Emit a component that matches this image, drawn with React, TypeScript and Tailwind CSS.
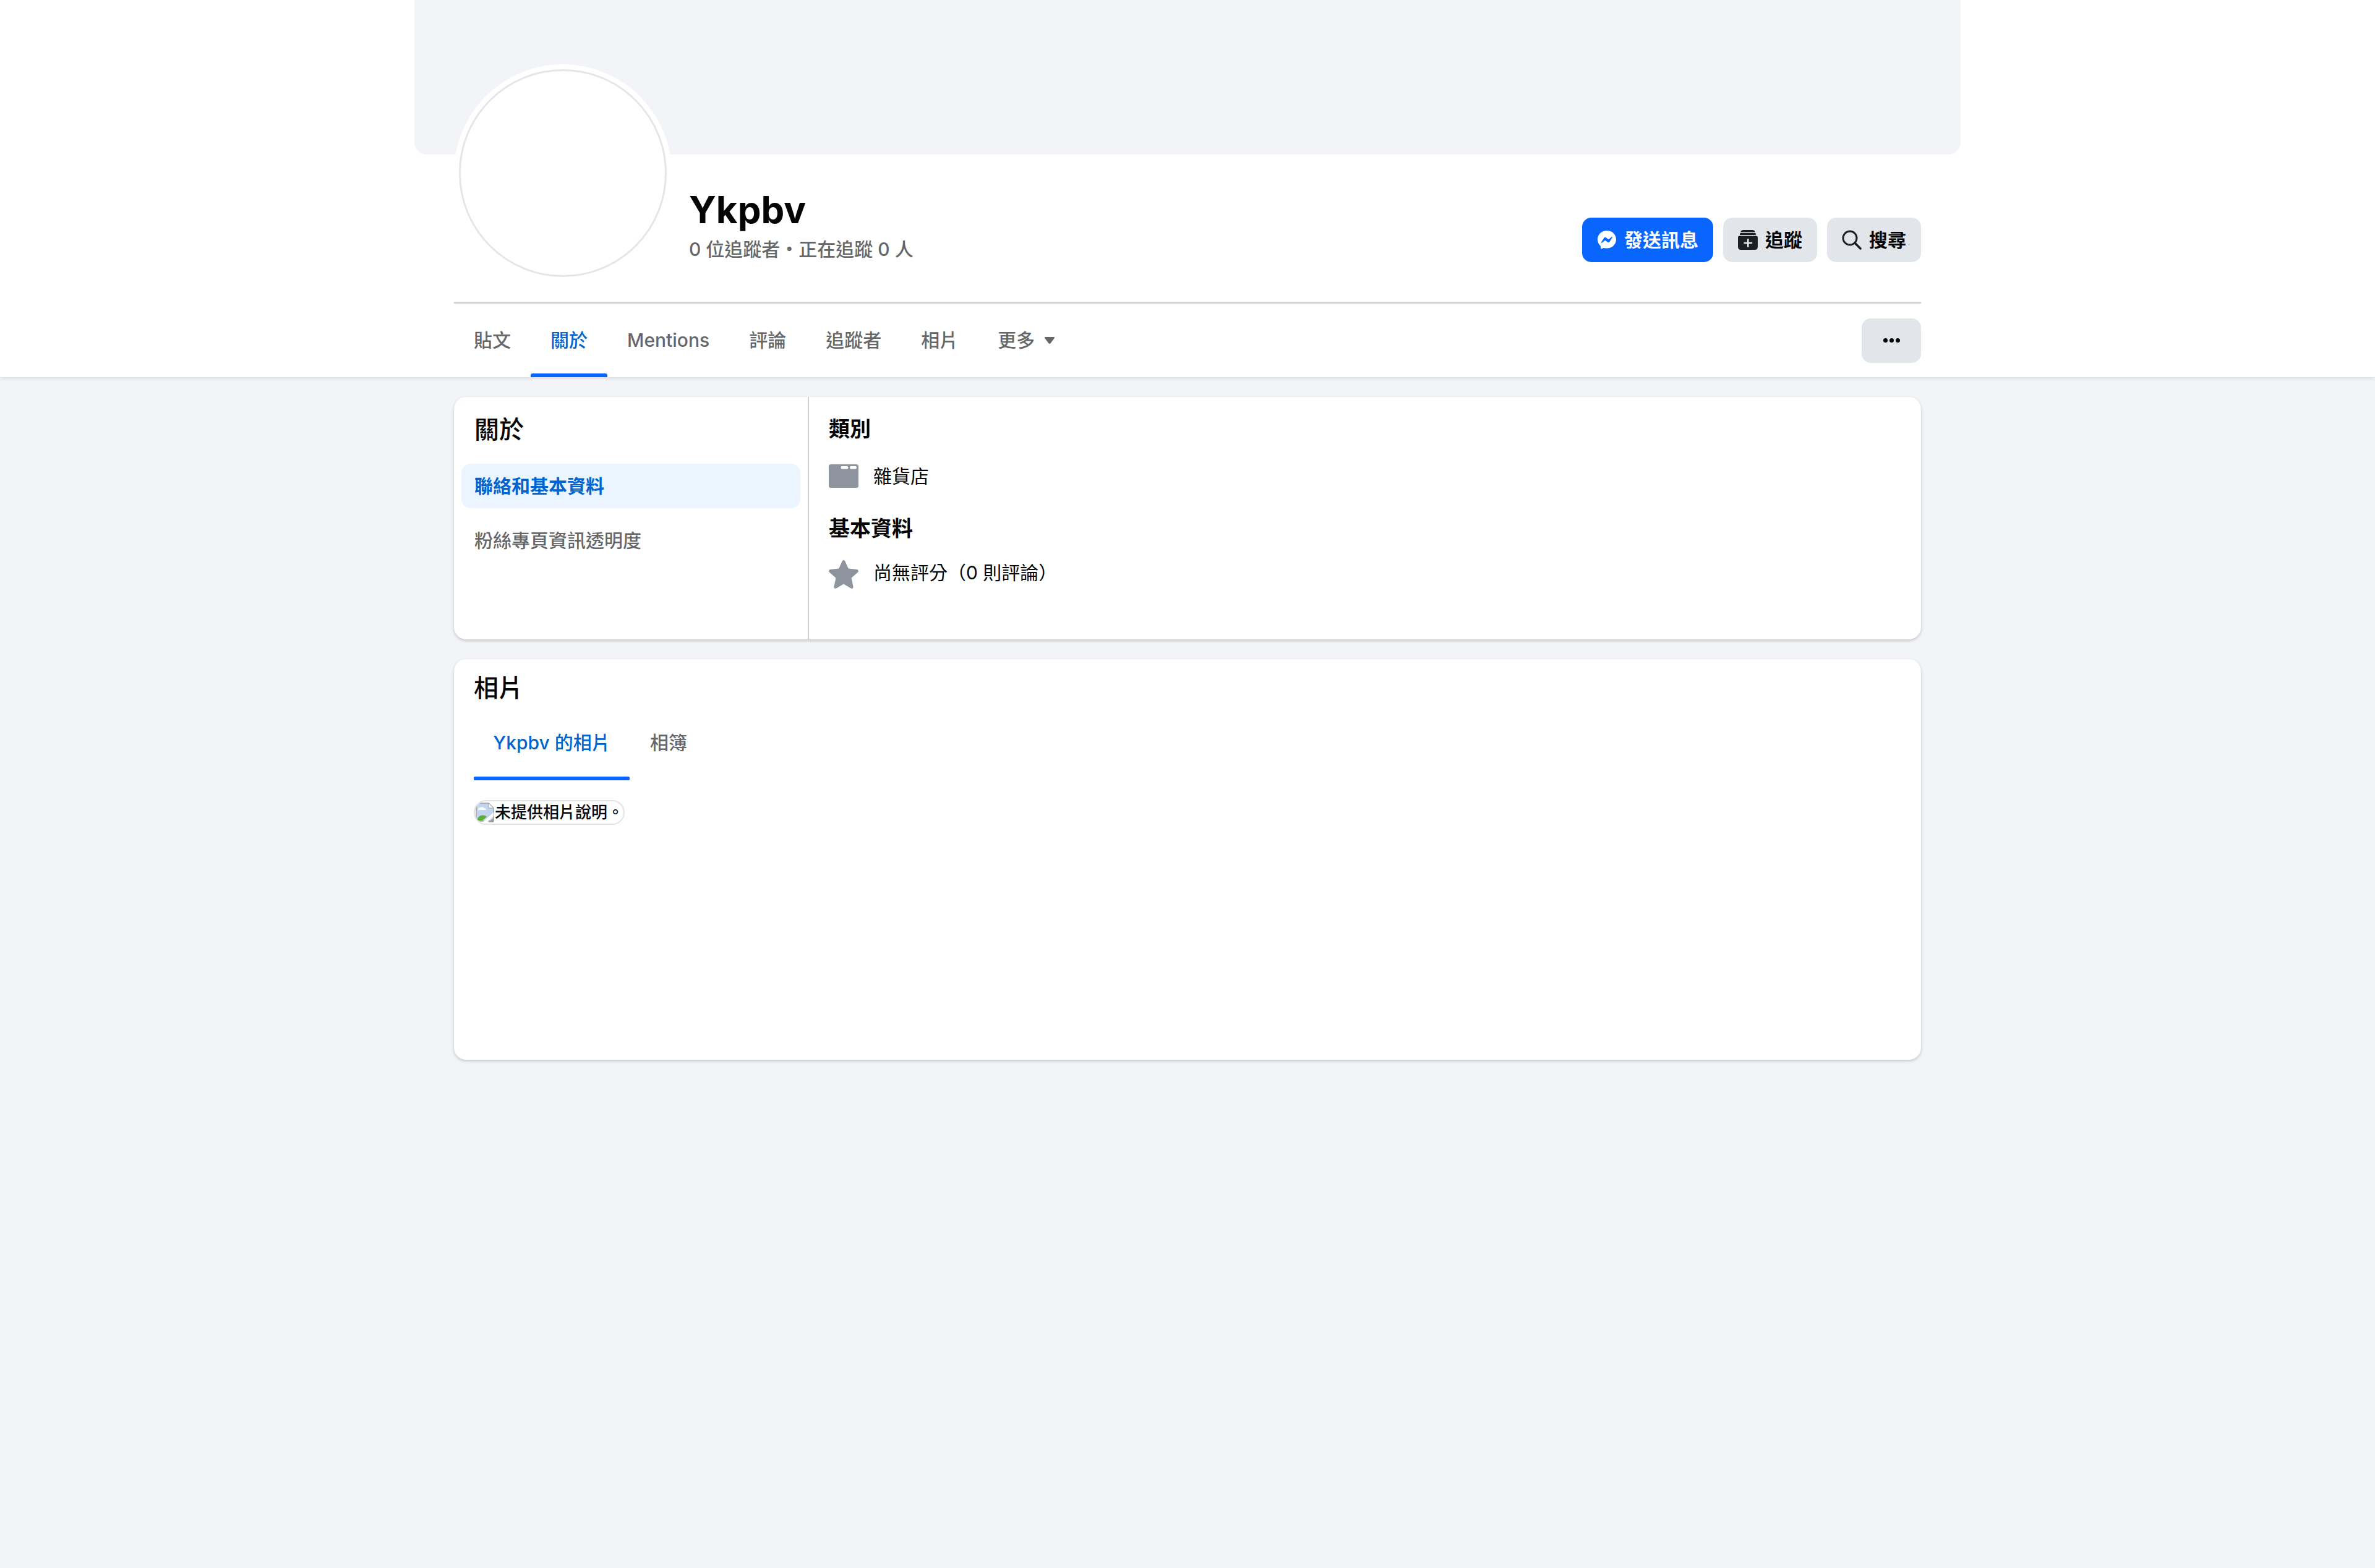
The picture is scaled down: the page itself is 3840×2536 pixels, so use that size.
const tabs = ['貼文', '關於', 'Mentions', '評論', '追蹤者', '相片']

function MessengerIcon() {
  return (
    <svg viewBox="0 0 32 32" className="w-[32px] h-[32px]">
      <path fill="#fff" d="M16 1C7.600 1 1 7.200 1 15.300c0 4.200 1.800 7.900 4.700 10.500.3.200.4.500.4.900l.1 2.600c0 .8.900 1.400 1.700 1l2.900-1.300c.2-.1.500-.1.800-.1 1.300.4 2.800.6 4.400.6 8.400 0 15-6.200 15-14.300S24.400 1 16 1z" />
      <path fill="#0866ff" d="M7 19.800l4.400-7c.7-1.100 2.200-1.400 3.200-.6l3.500 2.600c.3.200.8.200 1.100 0l4.700-3.600c.6-.5 1.400.3 1 .9l-4.400 7c-.7 1.100-2.200 1.400-3.200.6l-3.500-2.600c-.3-.2-.8-.2-1.100 0l-4.700 3.600c-.6.500-1.400-.3-1-.9z" />
    </svg>
  )
}

function FollowIcon() {
  return (
    <svg viewBox="0 0 32 32" className="w-[32px] h-[32px]">
      <path fill="#1c1e21" d="M9 0h14c2.500 0 4.400 1.200 4.900 3.400H4.100C4.600 1.200 6.500 0 9 0z" />
      <path fill="#1c1e21" d="M3.500 5h25l.6 3H2.900z" />
      <path fill="#1c1e21" d="M2.600 9.400h26.800c1.500 0 2.600 1.100 2.600 2.600v15.500c0 2.500-2 4.500-4.500 4.500h-23C2 32 0 30 0 27.500V12c0-1.500 1.100-2.600 2.600-2.600z" />
      <rect x="15" y="14" width="2.600" height="14" rx="1.300" fill="#e2e5e9" />
      <rect x="9.300" y="19.700" width="14" height="2.600" rx="1.300" fill="#e2e5e9" />
    </svg>
  )
}

function SearchIcon() {
  return (
    <svg viewBox="0 0 32 32" className="w-[32px] h-[32px]" fill="none" stroke="#1c1e21" strokeWidth="3" strokeLinecap="round">
      <circle cx="13" cy="13" r="11" />
      <path d="M21 21l9 9" strokeWidth="3.600" />
    </svg>
  )
}

function CategoryIcon() {
  return (
    <svg viewBox="0 0 48 38" className="w-[48px] h-[38px] shrink-0">
      <path fill="#8d949e" d="M3 0h42c1.700 0 3 1.300 3 3v32c0 1.700-1.300 3-3 3H3c-1.700 0-3-1.300-3-3V3c0-1.700 1.300-3 3-3z" />
      <rect x="19.500" y="3" width="12" height="4.500" rx="2.200" fill="#fff" />
      <rect x="34" y="3" width="11" height="4.500" rx="2.200" fill="#fff" />
    </svg>
  )
}

function StarIcon() {
  return (
    <svg viewBox="0 0 48 46" className="w-[48px] h-[46px] shrink-0">
      <path fill="#8d949e" d="M24 0c1 0 1.900.6 2.300 1.500l5.400 12 13.800 1.500c2.200.3 3.100 3 1.500 4.500L36.600 28.700l2.900 14c.4 2.200-1.900 3.900-3.800 2.800L24 38.600l-11.700 6.900c-1.900 1.100-4.200-.6-3.800-2.800l2.900-14L1 19.500c-1.600-1.500-.7-4.200 1.500-4.500l13.800-1.500 5.400-12C22.100.6 23 0 24 0z" />
    </svg>
  )
}

function BrokenImage() {
  return (
    <svg viewBox="0 0 32 32" className="w-[32px] h-[32px] shrink-0">
      <path fill="#c3d4ee" stroke="#a3a3a3" strokeWidth="1.500" d="M2 1h20l8 8v21H2z" />
      <path fill="#f7f9fd" stroke="#a3a3a3" strokeWidth="1" d="M22 1v8h8z" />
      <path fill="#fff" d="M5 11c2-4 7-5 10-2 2 0 3 1 3 3H5z" />
      <path fill="#5fae38" d="M3 29c2-8 9-11 16-6l-7 6z" />
      <path fill="#fff" d="M12 32l18-16v6L19 32z" />
      <path fill="#9a9a9a" d="M22 32l8-7v7z" />
    </svg>
  )
}

export default function App() {
  return (
    <div className="min-h-[2536px] bg-[#f2f4f8] text-[30px] text-[#050505] font-['Inter','Noto_Sans_CJK_TC',sans-serif]">

      {/* Header */}
      <div className="bg-white shadow-[0_2px_5px_rgba(0,0,0,0.1)]">
        <div className="w-[2500px] h-[250px] mx-auto bg-[#f2f4f8] rounded-b-[20px]" />

        <div className="w-[2372px] mx-auto">
          <div className="h-[241px] flex border-b-[3px] border-[#ced0d4]">
            <div className="relative z-10 w-[352px] h-[352px] -mt-[146px] shrink-0 rounded-full bg-white p-[8px]">
              <div className="w-full h-full rounded-full bg-white border-[3px] border-[#e6e6e6]" />
            </div>

            <div className="ml-[28px] pt-[53px]">
              <h1 className="text-[60px] leading-[72px] font-bold">Ykpbv</h1>
              <p className="mt-[8px] text-[30px] leading-[40px] font-medium text-[#65676b]">0 位追蹤者・正在追蹤 0 人</p>
            </div>

            <div className="ml-auto pt-[102px] flex gap-[16px]">
              <button className="h-[72px] w-[212px] rounded-[15px] bg-[#0866ff] text-white font-semibold flex items-center justify-center gap-[12px]">
                <MessengerIcon />發送訊息
              </button>
              <button className="h-[72px] w-[152px] rounded-[15px] bg-[#e2e5e9] font-semibold flex items-center justify-center gap-[12px]">
                <FollowIcon />追蹤
              </button>
              <button className="h-[72px] w-[152px] rounded-[15px] bg-[#e2e5e9] font-semibold flex items-center justify-center gap-[12px]">
                <SearchIcon />搜尋
              </button>
            </div>
          </div>

          {/* Tabs */}
          <div className="h-[119px] flex items-stretch justify-between">
            <div className="flex">
              {tabs.map(t => (
                <div key={t} className={`relative px-[32px] flex items-center font-medium ${t === '關於' ? 'text-[#0064d1]' : 'text-[#65676b]'}`}>
                  {t}
                  {t === '關於' && <span className="absolute left-0 right-0 bottom-0 h-[6px] rounded-t-[3px] bg-[#0866ff]" />}
                </div>
              ))}
              <div className="px-[32px] flex items-center gap-[16px] font-medium text-[#65676b]">
                更多
                <svg viewBox="0 0 16 11" className="w-[16px] h-[11px]"><path fill="#65676b" d="M1.200 0h13.600c1 0 1.500 1.100.9 1.900L9.500 10.300c-.8.900-2.200.9-3 0L.3 1.900C-.3 1.100.2 0 1.200 0z" /></svg>
              </div>
            </div>
            <button className="self-center w-[96px] h-[72px] rounded-[15px] bg-[#e2e5e9] flex items-center justify-center gap-[3px]">
              <span className="w-[7px] h-[7px] rounded-full bg-[#050505]" />
              <span className="w-[7px] h-[7px] rounded-full bg-[#050505]" />
              <span className="w-[7px] h-[7px] rounded-full bg-[#050505]" />
            </button>
          </div>
        </div>
      </div>

      <div className="w-[2372px] mx-auto pt-[32px] flex flex-col gap-[32px]">

        {/* About card */}
        <div className="h-[392px] flex bg-white rounded-[20px] shadow-[0_2px_5px_rgba(0,0,0,0.2)]">
          <div className="w-[574px] shrink-0 border-r-[2px] border-[#d0d0d0] pl-[12px] pr-[12px]">
            <h2 className="pl-[21px] pt-[25px] text-[40px] leading-[56px] font-medium">關於</h2>
            <div className="mt-[27px] h-[72px] pl-[21px] flex items-center rounded-[15px] bg-[#ebf5ff] font-semibold text-[#0064d1]">聯絡和基本資料</div>
            <div className="mt-[16px] h-[72px] pl-[21px] flex items-center font-medium text-[#65676b]">粉絲專頁資訊透明度</div>
          </div>
          <div className="pl-[32px] pt-[28px]">
            <h3 className="text-[34px] leading-[48px] font-semibold">類別</h3>
            <div className="mt-[33px] flex items-center gap-[24px]">
              <CategoryIcon /><span className="leading-[38px]">雜貨店</span>
            </div>
            <h3 className="mt-[42px] text-[34px] leading-[48px] font-semibold">基本資料</h3>
            <div className="mt-[27px] flex items-start gap-[24px]">
              <StarIcon /><span className="leading-[40px]">尚無評分（0 則評論）</span>
            </div>
          </div>
        </div>

        {/* Photos card */}
        <div className="h-[648px] px-[32px] bg-white rounded-[20px] shadow-[0_2px_5px_rgba(0,0,0,0.2)]">
          <h2 className="pt-[22px] text-[40px] leading-[50px] font-medium">相片</h2>
          <div className="mt-[8px] h-[116px] flex">
            <div className="relative w-[252px] flex items-center justify-center pb-[6px] font-medium text-[#0064d1]">
              Ykpbv 的相片
              <span className="absolute left-0 right-0 bottom-0 h-[6px] rounded-[2px] bg-[#0866ff]" />
            </div>
            <div className="px-[33px] flex items-center pb-[6px] font-medium text-[#65676b]">相簿</div>
          </div>
          <div className="mt-[32px] w-[244px] h-[40px] flex items-center rounded-full border-[2px] border-[#e4e4e4] text-[26px] leading-none font-medium whitespace-nowrap overflow-hidden">
            <BrokenImage />未提供相片說明。
          </div>
        </div>
      </div>
    </div>
  )
}
